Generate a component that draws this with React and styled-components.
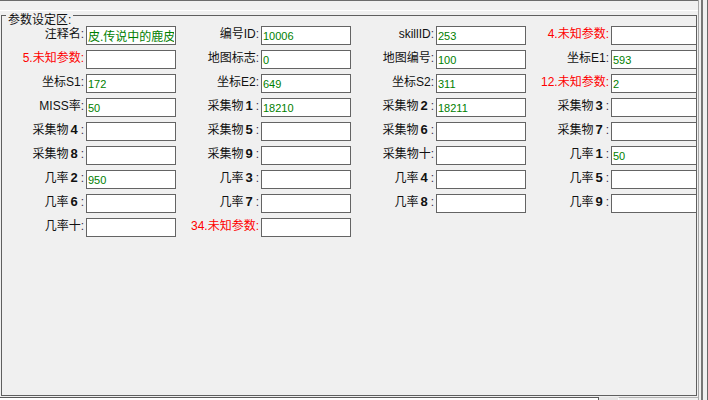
import React from 'react';
import styled, { createGlobalStyle } from 'styled-components';

const Global = createGlobalStyle`
  html, body {
    margin: 0;
    padding: 0;
    background: #f0f0f0;
    overflow: hidden;
  }
  body {
    font-family: "Liberation Sans", "Noto Sans CJK SC", sans-serif;
  }
`;

const Window = styled.div`
  display: flex;
  width: 708px;
  height: 400px;
  background: #f0f0f0;
  overflow: hidden;
`;

const Panel = styled.div`
  display: flex;
  flex-direction: column;
  width: 698px;
  border-right: 1px solid #a6a6a6;
`;

const Rails = styled.div`
  margin-left: 2px;
  width: 4px;
  border-left: 2px solid #767676;
  border-right: 1px solid #6a6a6a;
`;

const TopRule = styled.div`
  height: 9px;
  border-top: 1px solid #6b6b6b;
  border-bottom: 1px solid #ffffff;
`;

const GroupBox = styled.section`
  position: relative;
  box-sizing: border-box;
  margin: 4px 0 0 1px;
  width: 696px;
  height: 381px;
  border: 1px solid #5f5f5f;
  padding-top: 10px;
`;

const Legend = styled.span`
  position: absolute;
  top: -4px;
  left: 4px;
  padding: 0 2px;
  background: #f0f0f0;
  font-size: 12px;
  line-height: 16px;
  color: #111;
  white-space: nowrap;
`;

const FieldGrid = styled.div`
  display: grid;
  grid-template-columns: 84px 90px repeat(3, 85px 90px);
  grid-auto-rows: 19px;
  row-gap: 5px;
  overflow: hidden;
`;

const Label = styled.label`
  display: flex;
  justify-content: flex-end;
  align-items: baseline;
  padding-right: 2px;
  font-size: 12px;
  line-height: 16px;
  white-space: nowrap;
  color: ${(p) => (p.$alert ? '#ff0000' : '#111111')};
`;

const Num = styled.b`
  font-size: 13px;
  font-weight: 700;
  margin-left: 2px;
`;

const Colon = styled.span`
  color: ${(p) => (p.$alert ? '#ff0000' : '#3d2a4a')};
  margin-left: ${(p) => (p.$spaced ? '3px' : '0')};
`;

const Value = styled.input`
  box-sizing: border-box;
  width: 90px;
  height: 19px;
  margin: 0;
  padding: 0 1px;
  border: 1px solid #646464;
  border-radius: 0;
  background: #ffffff;
  outline: none;
  color: #008000;
  font-family: "Liberation Sans", "Noto Sans CJK SC", sans-serif;
  font-size: ${(p) => (p.$cjk ? '12px' : '11px')};
`;

const BottomStrip = styled.div`
  display: flex;
  height: 3px;
  margin-top: 1px;
`;

const WhiteTab = styled.div`
  box-sizing: border-box;
  width: 599px;
  background: #ffffff;
  border-top: 1px solid #5a5a5a;
  border-right: 1px solid #5a5a5a;
`;

const TabGap = styled.div`
  width: 19px;
  background: #e6e6e6;
`;

const PaleTab = styled.div`
  flex: 1;
  box-sizing: border-box;
  border-top: 1px solid #b4b4b4;
  border-left: 1px solid #ffffff;
`;

const rows = [
  [
    { text: '注释名', value: '皮.传说中的鹿皮', cjk: true },
    { text: '编号ID', value: '10006' },
    { text: 'skillID', value: '253' },
    { text: '4.未知参数', alert: true },
  ],
  [
    { text: '5.未知参数', alert: true },
    { text: '地图标志', value: '0' },
    { text: '地图编号', value: '100' },
    { text: '坐标E1', value: '593' },
  ],
  [
    { text: '坐标S1', value: '172' },
    { text: '坐标E2', value: '649' },
    { text: '坐标S2', value: '311' },
    { text: '12.未知参数', alert: true, value: '2' },
  ],
  [
    { text: 'MISS率', value: '50' },
    { text: '采集物', num: '1', value: '18210' },
    { text: '采集物', num: '2', value: '18211' },
    { text: '采集物', num: '3' },
  ],
  [
    { text: '采集物', num: '4' },
    { text: '采集物', num: '5' },
    { text: '采集物', num: '6' },
    { text: '采集物', num: '7' },
  ],
  [
    { text: '采集物', num: '8' },
    { text: '采集物', num: '9' },
    { text: '采集物十' },
    { text: '几率', num: '1', value: '50' },
  ],
  [
    { text: '几率', num: '2', value: '950' },
    { text: '几率', num: '3' },
    { text: '几率', num: '4' },
    { text: '几率', num: '5' },
  ],
  [
    { text: '几率', num: '6' },
    { text: '几率', num: '7' },
    { text: '几率', num: '8' },
    { text: '几率', num: '9' },
  ],
  [
    { text: '几率十' },
    { text: '34.未知参数', alert: true },
  ],
];

function Field({ field }) {
  return (
    <>
      <Label $alert={field.alert}>
        {field.text}
        {field.num && <Num>{field.num}</Num>}
        <Colon $alert={field.alert} $spaced={!!field.num}>:</Colon>
      </Label>
      <Value readOnly value={field.value || ''} $cjk={field.cjk} />
    </>
  );
}

export default function App() {
  return (
    <>
      <Global />
      <Window>
        <Panel>
          <TopRule />
          <GroupBox>
            <Legend>参数设定区:</Legend>
            <FieldGrid>
              {rows.map((row, r) =>
                row.map((field, c) => <Field key={`${r}-${c}`} field={field} />)
              )}
            </FieldGrid>
          </GroupBox>
          <BottomStrip>
            <WhiteTab />
            <TabGap />
            <PaleTab />
          </BottomStrip>
        </Panel>
        <Rails />
      </Window>
    </>
  );
}
